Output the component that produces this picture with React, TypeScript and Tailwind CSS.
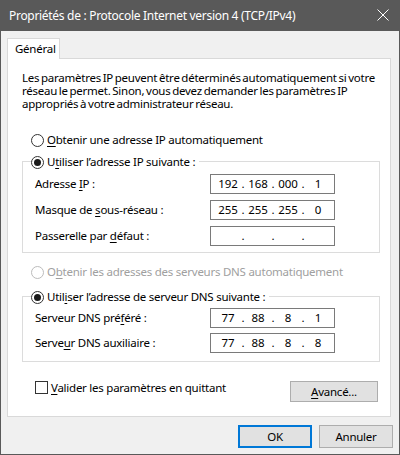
import React from "react";

const U = ({ children }: { children: React.ReactNode }) => (
  <span className="underline underline-offset-[2px] decoration-[1px]">{children}</span>
);

const Radio = ({ checked, disabled }: { checked?: boolean; disabled?: boolean }) => (
  <span
    className={`w-[13px] h-[13px] rounded-full border bg-white flex items-center justify-center shrink-0 ${
      disabled ? "border-[#bcbcbc]" : "border-[#333333]"
    }`}
  >
    {checked && <span className="w-[7px] h-[7px] rounded-full bg-[#1a1a1a]" />}
  </span>
);

const IpBox = ({ parts }: { parts: string[] }) => (
  <div className="w-[125px] h-[20px] shrink-0 border border-[#7a7a7a] bg-white flex items-center pl-[5px] tracking-normal">
    {parts.map((p, i) => (
      <React.Fragment key={i}>
        <span className="w-[24px] text-center">{p}</span>
        {i < 3 && <span className="w-[6px] text-center">.</span>}
      </React.Fragment>
    ))}
  </div>
);

const Row = ({ label, parts }: { label: React.ReactNode; parts: string[] }) => (
  <div className="flex items-center h-[20px]">
    <div className="w-[175px] shrink-0">{label}</div>
    <IpBox parts={parts} />
  </div>
);

export default function App() {
  return (
    <div
      className="w-[400px] h-[455px] bg-[#f0f0f0] border-x border-b border-[#595959] flex flex-col text-[11.5px] text-black whitespace-nowrap tracking-[-0.25px]"
      style={{ fontFamily: '"Noto Sans", "Open Sans", sans-serif' }}
    >
      <div className="h-[31px] bg-[#595959] flex items-center justify-between pl-[8px] pr-[10px] text-white shrink-0 text-[12px] tracking-[-0.3px]">
        <span>Propriétés de : Protocole Internet version 4 (TCP/IPv4)</span>
        <svg width="12" height="12" viewBox="0 0 12 12" className="mb-[1px]">
          <path d="M0.5 0.5 L11.5 11.5 M11.5 0.5 L0.5 11.5" stroke="white" strokeWidth="1" />
        </svg>
      </div>
      <div className="flex flex-col pl-[6px] pt-[7px]">
        <div className="flex">
          <div className="w-[53px] h-[21px] -mb-px relative z-10 bg-white border-t border-x border-[#d9d9d9] flex items-center pl-[7px]">
            Général
          </div>
        </div>
        <div className="w-[384px] h-[359px] bg-white border border-[#d9d9d9] flex flex-col items-start pl-[14px] pt-[12px]">
          <p className="leading-[13px] [word-spacing:-1px]">
            Les paramètres IP peuvent être déterminés automatiquement si votre
            <br />
            réseau le permet. Sinon, vous devez demander les paramètres IP
            <br />
            appropriés à votre administrateur réseau.
          </p>
          <div className="h-[20px] mt-[20px] ml-[9px] flex items-center gap-[3px]">
            <Radio />
            <span className="block underline-offset-[2px] first-letter:underline">
              Obtenir une adresse IP automatiquement
            </span>
          </div>
          <div className="relative mt-[11px] w-[358px] border border-[#dcdcdc] pt-[12px] pb-[6px] pl-[12px] flex flex-col gap-[6px]">
            <div className="absolute left-[8px] top-[-10px] h-[20px] bg-white flex items-center gap-[3px] pr-[4px]">
              <Radio checked />
              <span>
                U<U>t</U>iliser l’adresse IP suivante :
              </span>
            </div>
            <Row label={<>Adresse <U>I</U>P :</>} parts={["192", "168", "000", "1"]} />
            <Row label={<>Masque de <U>s</U>ous-réseau :</>} parts={["255", "255", "255", "0"]} />
            <Row label={<>Passerelle par <U>d</U>éfaut :</>} parts={["", "", "", ""]} />
          </div>
          <div className="h-[20px] mt-[9px] ml-[9px] flex items-center gap-[3px] text-[#a0a0a0]">
            <Radio disabled />
            <span>
              O<U>b</U>tenir les adresses des serveurs DNS automatiquement
            </span>
          </div>
          <div className="relative mt-[14px] w-[358px] border border-[#dcdcdc] pt-[11px] pb-[8px] pl-[12px] flex flex-col gap-[5px]">
            <div className="absolute left-[8px] top-[-10px] h-[20px] bg-white flex items-center gap-[3px] pr-[4px]">
              <Radio checked />
              <span>
                Util<U>i</U>ser l’adresse de serveur DNS suivante :
              </span>
            </div>
            <Row label={<>Serveur DNS pré<U>f</U>éré :</>} parts={["77", "88", "8", "1"]} />
            <Row label={<>Serve<U>u</U>r DNS auxiliaire :</>} parts={["77", "88", "8", "8"]} />
          </div>
          <div className="mt-[19px] w-[356px] flex items-start">
            <div className="flex items-center h-[13px] ml-[13px] gap-[3px]">
              <span className="w-[13px] h-[13px] border border-[#333333] bg-white shrink-0" />
              <span className="block underline-offset-[2px] first-letter:underline">
                Valider les paramètres en quittant
              </span>
            </div>
            <button className="ml-auto shrink-0 w-[88px] h-[21px] bg-[#e1e1e1] border border-[#adadad] flex items-center justify-center">
              <span className="block underline-offset-[2px] first-letter:underline">Avancé...</span>
            </button>
          </div>
        </div>
        <div className="flex justify-end gap-[7px] mt-[8px] pr-[6px]">
          <button className="w-[74px] h-[23px] bg-[#e1e1e1] border-2 border-[#0078d7] flex items-center justify-center">
            OK
          </button>
          <button className="w-[74px] h-[23px] bg-[#e1e1e1] border border-[#adadad] flex items-center justify-center">
            Annuler
          </button>
        </div>
      </div>
    </div>
  );
}
